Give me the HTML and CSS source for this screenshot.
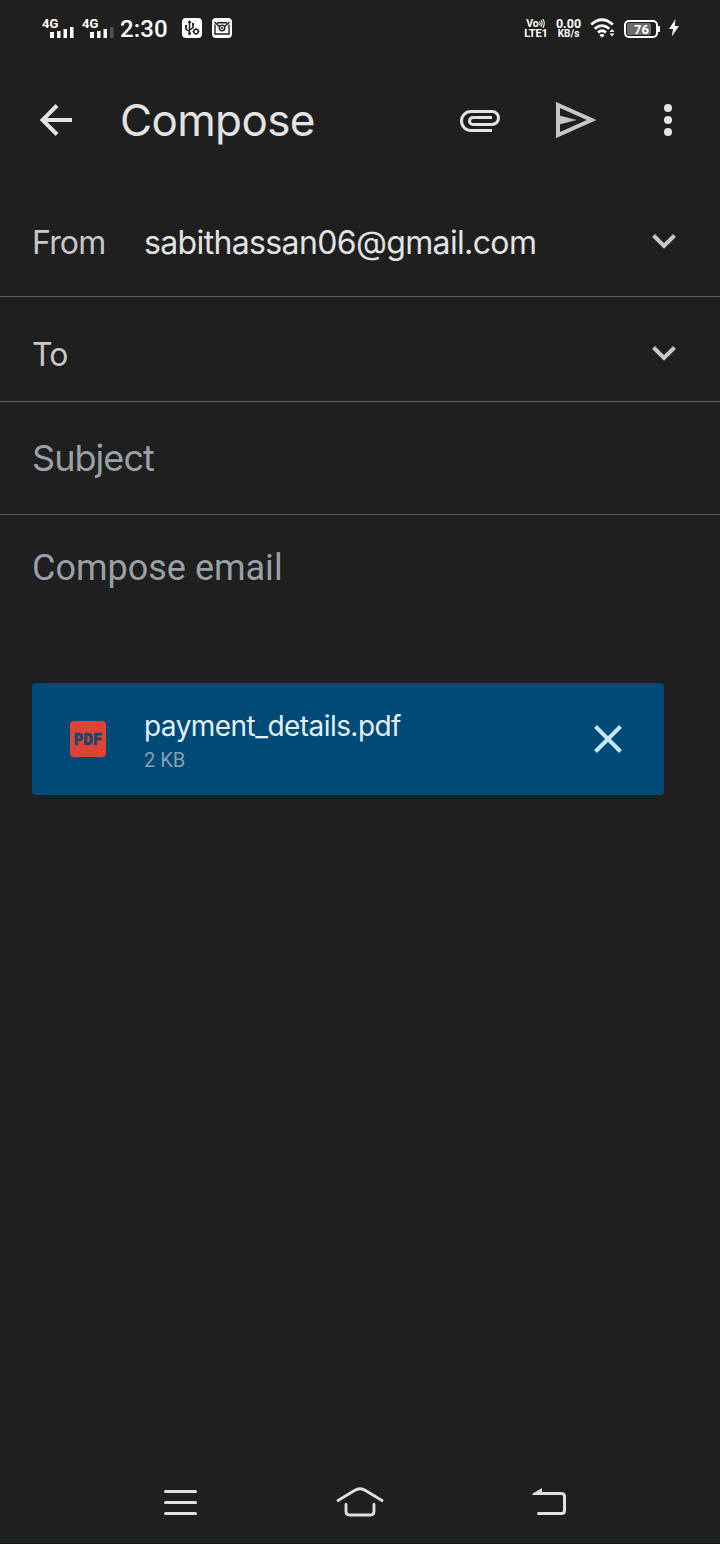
FILE: index.html
```
<!DOCTYPE html>
<html lang="en">
<head>
<meta charset="utf-8">
<title>Compose</title>
<link rel="stylesheet" href="styles.css">
</head>
<body>
<div class="screen">
  <header class="status">
    <div class="signal"><span class="net">4G</span><svg class="bars" width="24" height="12"><path d="M0 6h4v6h-4zM7 5h3.500v7h-3.500zM13.500 3h3.500v9h-3.500zM20 1h3.500v11h-3.500z" fill="#fff"/></svg></div>
    <div class="signal second"><span class="net">4G</span><svg class="bars" width="24" height="12"><path d="M0 6h4v6h-4zM7 5h3.500v7h-3.500zM13.500 3h3.500v9h-3.500z" fill="#fff"/><path d="M20 1h3.500v11h-3.500z" fill="#505050"/></svg></div>
    <span class="clock">2:30</span>
    <svg class="usb" width="20" height="20" viewBox="0 0 20 20"><rect width="20" height="20" rx="4" fill="#fff"/><path d="M7.500 3.500V16M7.500 13.500L4 11V8M7.500 12L11 9.500V6" fill="none" stroke="#202020" stroke-width="1.500"/><path d="M5.500 5L7.500 2l2 3zM3 7h2v2.500h-2zM10 5h2v2.500h-2z" fill="#202020"/><circle cx="7.500" cy="15.500" r="1.500" fill="#202020"/><circle cx="14" cy="13.500" r="2.300" fill="none" stroke="#202020" stroke-width="1.500"/><path d="M14 10v1M14 16v1M10.500 13.500h1M16.500 13.500h1" stroke="#202020"/></svg>
    <svg class="mail" width="20" height="20" viewBox="0 0 20 20"><rect width="20" height="20" rx="4" fill="#fff"/><path d="M3 6.500V16h14V6.500" fill="none" stroke="#202020" stroke-width="1.400"/><path d="M2.500 4L8 9M17.500 4L12 9M5 4.700h10" fill="none" stroke="#202020" stroke-width="1.500"/><circle cx="10" cy="10" r="2.800" fill="#ddd" stroke="#202020" stroke-width="1.300"/><circle cx="10" cy="10" r="1.100" fill="#202020"/></svg>
    <div class="spacer"></div>
    <div class="volte"><span class="vo">Vo<svg width="7" height="9" viewBox="0 0 7 9"><path d="M0.500 2.500q1.200 2 0 4M2 1.200q2.200 3 0 6.600M3.800 0q3 4.200 0 8.800" fill="none" stroke="#fff" stroke-width="1.100"/></svg></span><span class="lte">LTE1</span></div>
    <div class="rate"><span>0.00</span><span class="unit">KB/s</span></div>
    <svg class="wifi" width="26" height="20" viewBox="0 0 26 20"><path d="M1.200 6.500Q12 -3 22.800 6.500M4.700 10.700Q12 4.500 19.300 10.700M8 14.500Q12 11 16 14.500" fill="none" stroke="#fff" stroke-width="2.700"/><path d="M9.300 17q2.700-2 5.400 0L12 19.700zM19.500 14L22 11l2.500 3zM19.500 15.500h5L22 18.500z" fill="#fff"/></svg>
    <div class="battery"><span>76</span></div><i class="nub"></i>
    <svg class="bolt" width="10" height="18" viewBox="0 0 10 18"><path d="M6.500 0L0 10h4L2.800 17.500 10 7H5.800z" fill="#fff"/></svg>
  </header>

  <div class="appbar">
    <svg class="back" width="32" height="32" viewBox="0 0 32 32"><path d="M32 16H3M17 1.500L2.500 16 17 30.500" fill="none" stroke="#e3e3e3" stroke-width="4"/></svg>
    <h1 class="title">Compose</h1>
    <svg class="clip" width="40" height="22" viewBox="0 0 40 22"><path d="M32 20.500H11A9.500 9.500 0 0 1 11 1.500H32A6.500 6.500 0 0 1 32 14.500H13A3.500 3.500 0 0 1 13 7.500H32" fill="none" stroke="#e3e3e3" stroke-width="3"/></svg>
    <svg class="send" width="40" height="36" viewBox="0 0 40 36"><path d="M2 3v30l33.500-15z" fill="none" stroke="#c7c7c7" stroke-width="4"/><path d="M3 13.500l18 4.500-18 4.500z" fill="#c7c7c7"/></svg>
    <svg class="more" width="8" height="32" viewBox="0 0 8 32"><g fill="#e3e3e3"><circle cx="4" cy="4" r="4"/><circle cx="4" cy="16" r="4"/><circle cx="4" cy="28" r="4"/></g></svg>
  </div>

  <div class="row from"><span class="label">From</span><span class="address">sabithassan06@gmail.com</span><svg class="chev" width="24" height="16" viewBox="0 0 24 16"><path d="M1.500 1.500L12 12 22.500 1.500" fill="none" stroke="#c7c7c7" stroke-width="4"/></svg></div>
  <div class="row to"><span class="label">To</span><svg class="chev" width="24" height="16" viewBox="0 0 24 16"><path d="M1.500 1.500L12 12 22.500 1.500" fill="none" stroke="#c7c7c7" stroke-width="4"/></svg></div>
  <div class="row subject"><span class="subject-text">Subject</span></div>
  <div class="body-text"><span class="hint">Compose email</span></div>

  <div class="card">
    <div class="pdf"><span>PDF</span></div>
    <div class="file"><span class="name">payment_details.pdf</span><span class="size">2 KB</span></div>
    <svg class="close" width="28" height="28" viewBox="0 0 28 28"><path d="M1.500 1.500l25 25M26.500 1.500l-25 25" stroke="#c2e7ff" stroke-width="4"/></svg>
  </div>

  <nav class="nav">
    <svg class="menu" width="33" height="26" viewBox="0 0 33 26"><path d="M1.500 1.500h30M1.500 12.500h30M1.500 23.500h30" stroke="#e0e0e0" stroke-width="3" stroke-linecap="round"/></svg>
    <svg class="home" width="48" height="30" viewBox="0 0 48 30"><path d="M2 13.500L18.500 3.500q5.500-3.500 11 0L46 13.500M10 17.500v7q0 3.500 3.500 3.500h21q3.500 0 3.500-3.500v-7" fill="none" stroke="#e0e0e0" stroke-width="2.800" stroke-linecap="round"/></svg>
    <svg class="return" width="34" height="28" viewBox="0 0 34 28"><path d="M4 5.500H29.500q3 0 3 3v14q0 3-3 3H6.500" fill="none" stroke="#e0e0e0" stroke-width="3" stroke-linecap="round"/><path d="M0 6L10 0v7H1z" fill="#e0e0e0"/></svg>
  </nav>
</div>
</body>
</html>
```

FILE: styles.css
```
* { box-sizing: border-box; }
body { margin: 0; background: #1f1f1f; }
svg { display: block; flex: none; }
.screen { width: 720px; height: 1544px; background: #1f1f1f; border-bottom: 1px solid #1a1018; display: flex; flex-direction: column; font-family: Inter, Roboto, sans-serif; white-space: nowrap; }
.status { height: 56px; padding: 0 41px 0 42px; display: flex; align-items: center; color: #fff; font-family: Roboto, sans-serif; }
.signal { width: 40px; height: 20px; display: flex; flex-direction: column; justify-content: space-between; flex: none; }
.net { font: 700 13px/12px Roboto, sans-serif; }
.bars { margin-left: 8px; margin-top: -4px; }
.second { width: 38px; }
.clock { font-size: 24px; font-weight: 500; line-height: 28px; margin-top: 1px; width: 62px; letter-spacing: 0.1px; }
.mail { margin-left: 10px; }
.spacer { flex: 1; }
.volte, .rate { display: flex; flex-direction: column; align-items: center; font: 700 11px/10px Roboto, sans-serif; }
.volte { width: 24px; margin-right: 8px; padding-top: 2px; }
.vo { display: flex; font-size: 10.5px; }
.lte { font-size: 11px; letter-spacing: -0.1px; }
.rate { width: 25px; font-size: 12.5px; margin-right: 9px; line-height: 11px; }
.unit { font-size: 10px; line-height: 10px; }
.wifi { margin-right: 8px; }
.battery { width: 34px; height: 18px; border: 2px solid #fff; border-radius: 5px; padding: 1px; margin-top: 2px; }
.battery span { display: block; width: 24px; height: 12px; background: #6b6b6b; border-radius: 2px; font: 700 13px/13px Roboto, sans-serif; padding-left: 7px; }
.nub { width: 2px; height: 6px; background: #fff; margin: 2px 9px 0 0; }
.appbar { height: 128px; display: flex; align-items: center; padding: 0 48px 0 40px; }
.title { margin: 0 auto 0 48px; font-weight: 400; font-size: 44px; line-height: 56px; color: #e3e3e3; letter-spacing: -0.65px; }
.clip { margin-top: 2px; }
.send { margin-left: 56px; }
.more { margin-left: 68px; }
.row { display: flex; align-items: center; padding: 0 44px 0 32px; border-bottom: 1px solid #5f5f5f; }
.from { height: 113px; padding-top: 4px; }
.to { height: 105px; padding-top: 10px; }
.subject { height: 113px; }
.label { width: 112px; font-size: 32px; color: #c7c7c7; letter-spacing: -0.8px; }
.address { font-size: 32px; color: #e3e3e3; letter-spacing: -0.64px; }
.chev { margin: -1px 0 0 auto; }
.subject-text { font-size: 36px; color: #9aa0a6; letter-spacing: -0.95px; }
.body-text { height: 168px; padding: 32px 32px 0; }
.hint { display: block; font: 400 36px/42px Roboto, sans-serif; color: #9aa0a6; }
.card { width: 632px; height: 112px; margin-left: 32px; background: #004a77; border-radius: 4px; display: flex; align-items: center; padding: 0 42px 0 38px; }
.pdf { width: 36px; height: 36px; background: #db4437; border-radius: 4px; display: flex; align-items: center; justify-content: center; color: #1d446c; font: 700 16px/16px "DejaVu Sans Mono", monospace; -webkit-text-stroke: 0.7px #1d446c; padding-top: 1px; }
.file { margin-left: 38px; padding-top: 2px; display: flex; flex-direction: column; }
.name { font-size: 28px; line-height: 36px; color: #e3f0fa; letter-spacing: -0.55px; }
.size { font: 400 20px/26px Roboto, sans-serif; color: #8aa0b0; margin-top: 3px; }
.close { margin-left: auto; }
.nav { margin-top: auto; height: 82px; display: flex; align-items: center; padding: 0 154px 0 164px; }
.menu { margin-top: 2px; }
.home { margin-left: 139px; }
.return { margin-left: auto; }
```
